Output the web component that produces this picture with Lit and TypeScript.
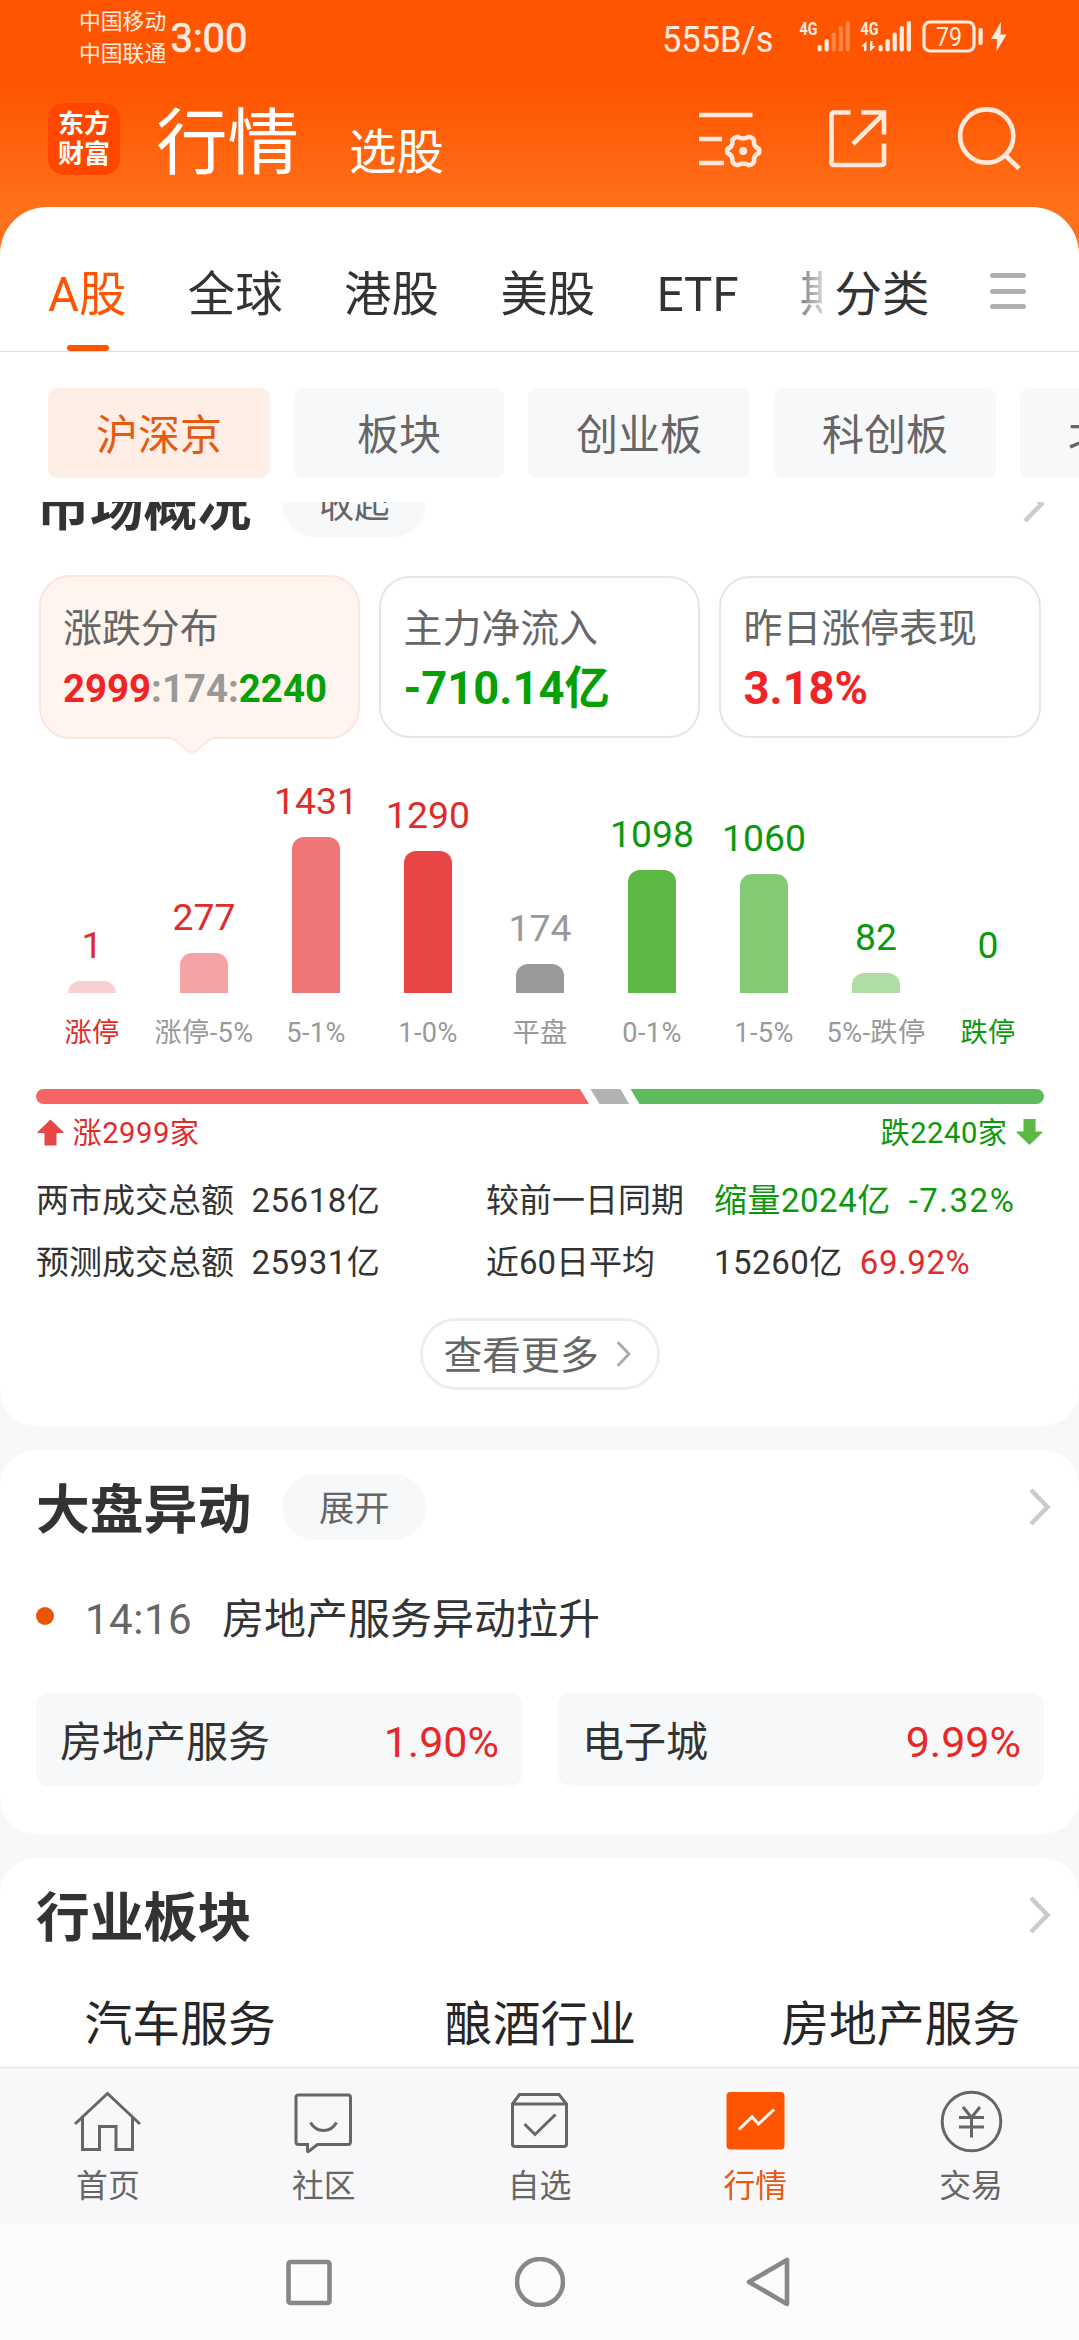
import { LitElement, html, css, svg, nothing } from "lit";
import { customElement } from "lit/decorators.js";
import { classMap } from "lit/directives/class-map.js";
import { styleMap } from "lit/directives/style-map.js";

interface Bucket {
  count: number;
  label: string;
  height: number;
  color: string;
  tone: string;
  edge?: boolean;
}

const BUCKETS: Bucket[] = [
  { count: 1, label: "涨停", height: 12, color: "#f9d0d0", tone: "up", edge: true },
  { count: 277, label: "涨停-5%", height: 40, color: "#f5a3a5", tone: "up" },
  { count: 1431, label: "5-1%", height: 156.5, color: "#ee7677", tone: "up" },
  { count: 1290, label: "1-0%", height: 142, color: "#e84646", tone: "up" },
  { count: 174, label: "平盘", height: 29.5, color: "#999999", tone: "flat" },
  { count: 1098, label: "0-1%", height: 123, color: "#5bb843", tone: "down" },
  { count: 1060, label: "1-5%", height: 119, color: "#84ca74", tone: "down" },
  { count: 82, label: "5%-跌停", height: 20, color: "#aedea3", tone: "down" },
  { count: 0, label: "跌停", height: 12, color: "transparent", tone: "down", edge: true },
];

const MARKETS = ["A股", "全球", "港股", "美股", "ETF", "期"];
const BOARDS = ["沪深京", "板块", "创业板", "科创板", "北"];
const SECTORS = ["汽车服务", "酿酒行业", "房地产服务"];

const chevron = html`<svg class="chevron" width="22" height="38" viewBox="0 0 22 38">
  <path d="M2 2 L18.500 19 L2 36" fill="none" stroke="#ccc" stroke-width="4.600" />
</svg>`;

const TABS = [
  {
    label: "首页",
    icon: svg`<path d="M3 34 L35.500 3.500 L68 34 M10.500 28 V59.500 H27.500 V36.500 H44 V59.500 H60.500 V28" />`,
  },
  {
    label: "社区",
    icon: svg`<path d="M10.500 5 H60 Q62.500 5 62.500 7.500 V52 Q62.500 54.500 60 54.500 H29.500 L20.500 61.500 Q19.500 62 19.500 60.500 V54.500 H10.500 Q8 54.500 8 52 V7.500 Q8 5 10.500 5 Z" /><path d="M22.500 32.500 Q27 40.500 35.500 40.500 Q44 40.500 48.500 32.500" />`,
  },
  {
    label: "自选",
    icon: svg`<path d="M8.500 14 L15.500 4.500 H55 L62.500 14 V54 Q62.500 56.500 60 56.500 H11 Q8.500 56.500 8.500 54 Z M8.500 14 H62.500 M20.500 34 L31 44.500 L51.500 24.500" />`,
  },
  {
    label: "行情",
    active: true,
    icon: svg`<rect x="6.500" y="2" width="58" height="57.500" rx="4" fill="#ff5500" stroke="none" /><path d="M19 39.500 L32 27 L38.500 34 L54 19.500" stroke="#fff" />`,
  },
  {
    label: "交易",
    icon: svg`<circle cx="35.500" cy="31.500" r="29.300" /><path d="M27 17 L35.500 27.500 L44 17 M35.500 27.500 V47.500 M23 27.500 H48 M23 37 H48" />`,
  },
];

@customElement("status-bar")
class StatusBar extends LitElement {
  static styles = css`
    :host {
      display: flex;
      justify-content: space-between;
      align-items: flex-start;
      height: 75px;
      padding: 0 66px 0 79px;
      box-sizing: border-box;
      color: #ffece0;
    }
    .left {
      display: flex;
      align-items: center;
      height: 75px;
    }
    .carriers {
      font-size: 21.8px;
      line-height: 32px;
      width: 91px;
      white-space: nowrap;
    }
    text {
      font-family: Roboto, "Noto Sans CJK SC", sans-serif;
      fill: #ffece0;
    }
    svg {
      display: block;
    }
  `;

  private bars(x: number, dimFrom: number) {
    const tops = [45, 39, 32.5, 26, 21];
    return tops.map(
      (top, i) => svg`<rect x=${x + i * 7.05} y=${top} width="4.200" height=${51.5 - top} rx="2" fill="#ffece0" opacity=${i >= dimFrom ? 0.32 : 1} />`
    );
  }

  render() {
    return html`
      <div class="left">
        <div class="carriers"><div>中国移动</div><div>中国联通</div></div>
        <svg width="80" height="75" viewBox="170 0 80 75">
          <text x="170.500" y="52.300" font-size="41.500" stroke="#ffece0" stroke-width="0.700" textLength="77" lengthAdjust="spacingAndGlyphs">3:00</text>
        </svg>
      </div>
      <svg width="350" height="75" viewBox="663 0 350 75">
        <text x="662" y="51.500" font-size="37.500" textLength="111.500" lengthAdjust="spacingAndGlyphs">555B/s</text>
        <text x="799.500" y="34.500" font-size="18.500" font-weight="700" textLength="18" lengthAdjust="spacingAndGlyphs">4G</text>
        ${this.bars(817.5, 2)}
        <text x="860.500" y="34.500" font-size="18.500" font-weight="700" textLength="18" lengthAdjust="spacingAndGlyphs">4G</text>
        <path d="M866.500 51 V41 L861 46.500 H864 V51 Z M870 41 V51.500 L875.500 46 H872.500 V41 Z" fill="#ffece0" />
        ${this.bars(878.5, 9)}
        <rect x="924" y="22" width="50" height="29" rx="6" fill="none" stroke="#ffece0" stroke-width="3.200" />
        <text x="936" y="46" font-size="25" textLength="26" lengthAdjust="spacingAndGlyphs">79</text>
        <rect x="978.500" y="28" width="4.200" height="17" rx="2" fill="#ffece0" />
        <path d="M1001 22 L991 39 H997 L996.500 51.500 L1006.500 34.500 H1000.500 Z" fill="#ffece0" />
      </svg>
    `;
  }
}

@customElement("app-header")
class AppHeader extends LitElement {
  static styles = css`
    :host {
      display: flex;
      align-items: center;
      height: 132px;
      padding: 0 58px 0 48px;
      box-sizing: border-box;
      color: #fff;
    }
    .logo {
      width: 72px;
      height: 72px;
      margin-top: -4px;
      padding: 6px 0 0 0;
      box-sizing: border-box;
      border-radius: 16px;
      background: #ff4700;
      font-size: 26px;
      line-height: 30px;
      font-weight: 700;
      text-align: center;
    }
    .title {
      margin-left: 36px;
      padding-top: 5px;
      font-size: 71.5px;
      line-height: 127px;
    }
    .alt {
      margin-left: 50px;
      padding-top: 25px;
      font-size: 47.5px;
      line-height: 109px;
    }
    .actions {
      margin-left: auto;
      display: flex;
      gap: 64px;
      align-items: center;
      padding-bottom: 4px;
    }
    svg {
      display: block;
      fill: none;
      stroke: #ffe9dc;
      stroke-width: 4.6;
    }
    .dot {
      fill: #ffe9dc;
      stroke: none;
    }
  `;
  render() {
    return html`
      <div class="logo">东方<br />财富</div>
      <div class="title">行情</div>
      <div class="alt">选股</div>
      <div class="actions">
        <svg width="66" height="66" viewBox="700 106 66 66">
          <path d="M699.400 115 H753.500 M699.400 139 H723 M699.400 163 H725" />
          <path
            stroke-linejoin="round"
            d="M744.200 138.500 Q747 138.500 749.500 136.800 Q753 137 755 140.200 Q754.500 143.500 756 146 Q757.500 148 760 149 Q760.800 151 760 153 Q757.500 154 756 156 Q754.500 158.500 755 161.800 Q753 165 749.500 165.200 Q747 163.500 744.200 163.500 Q741.400 163.500 738.900 165.200 Q735.400 165 733.400 161.800 Q733.900 158.500 732.400 156 Q730.900 154 728.400 153 Q727.600 151 728.400 149 Q730.900 148 732.400 146 Q733.900 143.500 733.400 140.200 Q735.400 137 738.900 136.800 Q741.400 138.500 744.200 138.500 Z"
          />
          <circle class="dot" cx="744.200" cy="151" r="4" />
        </svg>
        <svg width="60" height="66" viewBox="830 106 60 66">
          <path d="M851.500 112.500 H835 Q832.500 112.500 832.500 115 V162.500 Q832.500 165 835 165 H882.500 Q885 165 885 162.500 V143.500 M862.500 112.500 H885 V134.500 M885 113.500 L854 144" />
        </svg>
        <svg width="68" height="66" viewBox="954 106 68 66">
          <circle cx="987.700" cy="136" r="26.600" />
          <path d="M1006 155 L1020 168.500" />
        </svg>
      </div>
    `;
  }
}

@customElement("market-tabs")
class MarketTabs extends LitElement {
  static styles = css`
    :host {
      display: block;
    }
    .tabs {
      display: flex;
      height: 145px;
      box-sizing: border-box;
      border-bottom: 1.5px solid #dfdfdf;
      font-size: 47.4px;
      color: #333;
      white-space: nowrap;
    }
    .strip {
      display: flex;
      gap: 61.5px;
      width: 822px;
      padding-left: 48px;
      box-sizing: border-box;
      overflow: hidden;
      -webkit-mask-image: linear-gradient(to right, #000 780px, transparent 834px);
      mask-image: linear-gradient(to right, #000 780px, transparent 834px);
    }
    .tab {
      flex: none;
      display: flex;
      flex-direction: column;
      align-items: center;
      justify-content: space-between;
      line-height: 56px;
      padding-top: 60px;
    }
    .active {
      color: #ff5500;
    }
    .active::after {
      content: "";
      width: 42px;
      height: 6px;
      margin-left: 2px;
      border-radius: 3px;
      background: #ff5500;
    }
    .more {
      padding: 60px 0 0 12.5px;
      line-height: 56px;
    }
    .menu {
      display: flex;
      flex-direction: column;
      gap: 10.6px;
      padding: 66px 0 0 61px;
    }
    .menu span {
      width: 36px;
      height: 5px;
      border-radius: 3px;
      background: #b0b0b0;
    }
    .chips {
      display: flex;
      gap: 24px;
      padding: 36px 0 24px 48px;
      overflow: hidden;
      font-size: 42px;
      color: #666;
    }
    .chip {
      flex: none;
      min-width: 210px;
      padding: 0 48px;
      box-sizing: border-box;
      height: 90px;
      line-height: 95px;
      text-align: center;
      border-radius: 9px;
      background: #f7f8fa;
    }
    .chip:last-child {
      text-align: left;
    }
    .on {
      background: #ffeee6;
      color: #e65a0f;
    }
  `;
  render() {
    return html`
      <div class="tabs">
        <div class="strip">
          ${MARKETS.map((m, i) => html`<div class=${classMap({ tab: true, active: i === 0 })}>${m}</div>`)}
        </div>
        <div class="more">分类</div>
        <div class="menu"><span></span><span></span><span></span></div>
      </div>
      <div class="chips">
        ${BOARDS.map((b, i) => html`<div class=${classMap({ chip: true, on: i === 0 })}>${b}</div>`)}
      </div>
    `;
  }
}

@customElement("section-head")
class SectionHead extends LitElement {
  static properties = { heading: {}, action: {} };
  declare heading: string;
  declare action?: string;
  static styles = css`
    :host {
      display: flex;
      align-items: center;
      height: 114px;
      padding: 0 28.5px 0 36px;
    }
    .heading {
      font-size: 53.8px;
      font-weight: 700;
      line-height: 80px;
      padding-top: 8px;
      color: #333;
    }
    .pill {
      margin-left: 31px;
      width: 144px;
      height: 66px;
      line-height: 70px;
      border-radius: 33px;
      text-align: center;
      font-size: 35.3px;
      color: #666;
      background: #f6f8fa;
    }
    .chevron {
      margin-left: auto;
    }
  `;
  render() {
    return html`
      <div class="heading">${this.heading}</div>
      ${this.action ? html`<div class="pill">${this.action}</div>` : nothing}
      ${chevron}
    `;
  }
}

@customElement("market-overview")
class MarketOverview extends LitElement {
  static styles = css`
    :host {
      display: block;
      height: 979px;
      background: #fff;
      border-radius: 0 0 36px 36px;
    }
    section-head {
      padding-right: 34.5px;
    }
    .up {
      color: #df2b2b;
    }
    .down {
      color: #0c980c;
    }
    .flat {
      color: #999;
    }
    .stats {
      display: grid;
      grid-template-columns: 321px 321px 322px;
      gap: 19px;
      padding: 14px 0 0 39px;
      height: 164px;
    }
    .stat {
      position: relative;
      box-sizing: border-box;
      height: 162px;
      margin-top: 1px;
      border: 2px solid #e6e6e6;
      border-radius: 31px;
      padding: 21.5px 0 0 22.5px;
      white-space: nowrap;
    }
    .picked {
      height: 164px;
      margin-top: 0;
      padding: 22.5px 0 0 22px;
      background: #fff4ee;
      border-color: #fde5da;
    }
    .tail {
      position: absolute;
      left: 131px;
      top: 159px;
    }
    .name {
      font-size: 38.9px;
      line-height: 58px;
      color: #666;
    }
    .value {
      font-size: 45.3px;
      line-height: 61.5px;
      font-weight: 700;
    }
    .value .up, .value.up {
      color: #f02424;
    }
    .value .down, .value.down {
      color: #05a005;
    }
    .ratio {
      font-size: 38.4px;
    }
    .chart {
      display: grid;
      grid-template-columns: repeat(9, 112px);
      margin: 32px 0 0 36px;
      height: 222px;
      align-items: end;
    }
    .col {
      display: flex;
      flex-direction: column;
      align-items: center;
    }
    .count {
      font-size: 37.3px;
      line-height: 44px;
      margin-bottom: 14px;
    }
    .bar {
      width: 48px;
      border-radius: 12px 12px 0 0;
    }
    .axis {
      display: grid;
      grid-template-columns: repeat(9, 112px);
      margin: 19px 0 0 36px;
      height: 42px;
      font-size: 27.2px;
      line-height: 42px;
      letter-spacing: 0.4px;
      text-align: center;
      white-space: nowrap;
      color: #999;
    }
    .split {
      display: block;
      margin: 35px 0 0 36px;
    }
    .legend {
      display: flex;
      justify-content: space-between;
      padding: 8px 36px 0 37px;
      font-size: 29.2px;
      line-height: 40px;
      letter-spacing: 0.5px;
    }
    .legend div {
      display: flex;
      align-items: center;
      gap: 8.5px;
    }
    .legend span {
      padding-top: 1px;
    }
    .totals {
      display: grid;
      grid-template-columns: 215.5px 234.5px 228px auto;
      padding: 17px 0 0 36px;
      font-size: 33px;
      line-height: 62px;
      color: #333;
      white-space: nowrap;
    }
    .num {
      letter-spacing: 0.5px;
    }
    .num span {
      margin-left: 17px;
      letter-spacing: 0.6px;
    }
    .num .neg {
      margin-left: 18px;
      letter-spacing: 1.5px;
    }
    .button {
      display: flex;
      align-items: center;
      gap: 18px;
      width: 240px;
      height: 72px;
      box-sizing: border-box;
      margin: 24px auto 0;
      padding-left: 21px;
      border: 3px solid #eee;
      border-radius: 36px;
      font-size: 38.8px;
      line-height: 66px;
      color: #666;
    }
    .button span {
      padding-top: 4px;
    }
  `;
  render() {
    return html`
      <section-head heading="市场概况" action="收起"></section-head>
      <div class="stats">
        <div class="stat picked">
          <div class="name">涨跌分布</div>
          <div class="value ratio flat"><span class="up">2999</span>:174:<span class="down">2240</span></div>
          <svg class="tail" width="40" height="18" viewBox="0 0 40 18">
            <path d="M0 0 H40 V2 L23.500 15 Q20 17.500 16.500 15 L0 2 Z" fill="#fff4ee" />
            <path d="M0 2 L16.500 15 Q20 17.500 23.500 15 L40 2" fill="none" stroke="#fde5da" stroke-width="1.600" />
          </svg>
        </div>
        <div class="stat">
          <div class="name">主力净流入</div>
          <div class="value down">-710.14亿</div>
        </div>
        <div class="stat">
          <div class="name">昨日涨停表现</div>
          <div class="value up">3.18%</div>
        </div>
      </div>
      <div class="chart">
        ${BUCKETS.map(
          (b) => html`<div class="col">
            <div class="count ${b.tone}">${b.count}</div>
            <div class="bar" style=${styleMap({ height: `${b.height}px`, background: b.color })}></div>
          </div>`
        )}
      </div>
      <div class="axis">
        ${BUCKETS.map((b) => html`<div class=${b.edge ? b.tone : "flat"}>${b.label}</div>`)}
      </div>
      <svg class="split" width="1008" height="15" viewBox="0 0 1008 15">
        <path d="M7.500 0 H544 L553 15 H7.500 A7.500 7.500 0 0 1 7.500 0 Z" fill="#f76464" />
        <path d="M554.500 0 H584.500 L593 15 H563.500 Z" fill="#b2b2b2" />
        <path d="M594.500 0 H1000.500 A7.500 7.500 0 0 1 1000.500 15 H603.500 Z" fill="#5cbb5c" />
      </svg>
      <div class="legend">
        <div class="up">
          <svg width="27" height="27" viewBox="0 0 27 27"><path d="M13.500 0.500 L26.500 13 V14 H19.500 V26.500 H7.500 V14 H0.500 V13 Z" fill="#e84646" /></svg>
          <span>涨2999家</span>
        </div>
        <div class="down">
          <span>跌2240家</span>
          <svg width="27" height="27" viewBox="0 0 27 27"><path d="M13.500 26 L26.500 13.500 V12.500 H19.500 V0 H7.500 V12.500 H0.500 V13.500 Z" fill="#5bb843" /></svg>
        </div>
      </div>
      <div class="totals">
        <div>两市成交总额</div>
        <div class="num">25618亿</div>
        <div>较前一日同期</div>
        <div class="num down">缩量2024亿<span class="neg">-7.32%</span></div>
        <div>预测成交总额</div>
        <div class="num">25931亿</div>
        <div>近60日平均</div>
        <div class="num">15260亿<span class="up">69.92%</span></div>
      </div>
      <div class="button">
        <span>查看更多</span>
        <svg width="14" height="26" viewBox="0 0 14 26"><path d="M1.500 2 L12 13 L1.500 24" fill="none" stroke="#aaa" stroke-width="2.800" stroke-linecap="round" /></svg>
      </div>
    `;
  }
}

@customElement("market-moves")
class MarketMoves extends LitElement {
  static styles = css`
    :host {
      display: block;
      height: 384px;
      background: #fff;
      border-radius: 36px;
    }
    .event {
      display: flex;
      align-items: center;
      height: 60px;
      padding: 26px 0 0 36px;
      font-size: 42px;
      line-height: 60px;
      color: #333;
    }
    .dot {
      width: 18px;
      height: 18px;
      margin: -8px 31px 0 0;
      border-radius: 50%;
      background: #e95504;
    }
    .time {
      width: 137px;
      letter-spacing: 0.5px;
      color: #666;
    }
    .stocks {
      display: grid;
      grid-template-columns: 486px 486px;
      gap: 36px;
      padding: 43px 0 0 36px;
    }
    .stock {
      display: flex;
      justify-content: space-between;
      height: 93px;
      padding: 0 23px 0 24px;
      border-radius: 12px;
      background: #f6f8fa;
      font-size: 42px;
      line-height: 99px;
      color: #333;
    }
    .gain {
      font-size: 43px;
      color: #e82828;
    }
  `;
  render() {
    return html`
      <section-head heading="大盘异动" action="展开"></section-head>
      <div class="event"><span class="dot"></span><span class="time">14:16</span><span>房地产服务异动拉升</span></div>
      <div class="stocks">
        <div class="stock"><span>房地产服务</span><span class="gain">1.90%</span></div>
        <div class="stock"><span>电子城</span><span class="gain">9.99%</span></div>
      </div>
    `;
  }
}

@customElement("sector-list")
class SectorList extends LitElement {
  static styles = css`
    :host {
      display: block;
      height: 300px;
      background: #fff;
      border-radius: 36px 36px 0 0;
    }
    .names {
      display: grid;
      grid-template-columns: repeat(3, 360.3px);
      padding-top: 23px;
      text-align: center;
      font-size: 47.8px;
      line-height: 60px;
      color: #262626;
    }
  `;
  render() {
    return html`
      <section-head heading="行业板块"></section-head>
      <div class="names">${SECTORS.map((s) => html`<div>${s}</div>`)}</div>
    `;
  }
}

@customElement("bottom-bar")
class BottomBar extends LitElement {
  static styles = css`
    :host {
      display: block;
    }
    .tabs {
      display: grid;
      grid-template-columns: repeat(5, 1fr);
      height: 157px;
      box-sizing: border-box;
      border-top: 1.5px solid #e2e2e2;
      background: #f8f8fa;
    }
    .tab {
      display: flex;
      flex-direction: column;
      align-items: center;
      padding-top: 22px;
      font-size: 31.8px;
      line-height: 44px;
      color: #666;
    }
    .tab svg {
      fill: none;
      stroke: #666;
      stroke-width: 3;
      margin-bottom: 10px;
    }
    .active {
      color: #e65a0f;
    }
    .system {
      display: flex;
      justify-content: center;
      align-items: center;
      gap: 181px;
      height: 116px;
      background: #fcfcfc;
    }
    .system svg {
      fill: none;
      stroke: #888;
      stroke-width: 4.6;
      stroke-linejoin: round;
    }
  `;
  render() {
    return html`
      <div class="tabs">
        ${TABS.map(
          (t) => html`<div class=${classMap({ tab: true, active: !!t.active })}>
            <svg width="71" height="64" viewBox="0 0 71 64">${t.icon}</svg>
            ${t.label}
          </div>`
        )}
      </div>
      <div class="system">
        <svg width="50" height="50" viewBox="0 0 50 50"><rect x="4.500" y="5" width="41" height="41" rx="2" /></svg>
        <svg width="50" height="50" viewBox="0 0 50 50"><circle cx="25" cy="25" r="23" /></svg>
        <svg width="50" height="50" viewBox="0 0 50 50"><path d="M3 25 L41 3 V47 Z" /></svg>
      </div>
    `;
  }
}

@customElement("app-root")
class AppRoot extends LitElement {
  static styles = css`
    :host {
      display: flex;
      flex-direction: column;
      width: 1079px;
      height: 2340px;
      overflow: hidden;
      font-family: Roboto, "Noto Sans CJK SC", sans-serif;
      background: #f6f8fa;
    }
    .top {
      flex: none;
      height: 295px;
      margin-bottom: -88px;
      background: linear-gradient(#ff5500 85px, #ff701a 207px);
    }
    .sheet {
      flex: none;
      height: 295px;
      border-radius: 47px 47px 0 0;
      background: #fff;
    }
    .scroll {
      flex: 1;
      min-height: 0;
      overflow: hidden;
    }
    .feed {
      display: flex;
      flex-direction: column;
      gap: 24px;
      margin-top: -55px;
    }
  `;
  render() {
    return html`
      <div class="top">
        <status-bar></status-bar>
        <app-header></app-header>
      </div>
      <div class="sheet"><market-tabs></market-tabs></div>
      <div class="scroll">
        <div class="feed">
          <market-overview></market-overview>
          <market-moves></market-moves>
          <sector-list></sector-list>
        </div>
      </div>
      <bottom-bar></bottom-bar>
    `;
  }
}
